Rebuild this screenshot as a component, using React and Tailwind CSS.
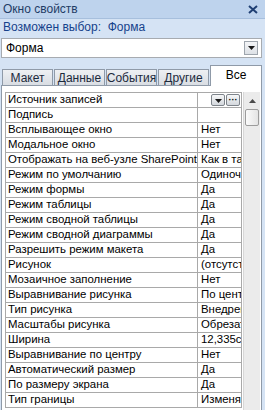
import React from 'react';

const rows = [
  ["Источник записей", ""],
  ["Подпись", ""],
  ["Всплывающее окно", "Нет"],
  ["Модальное окно", "Нет"],
  ["Отображать на веб-узле SharePoint", "Как в таблице"],
  ["Режим по умолчанию", "Одиночная форма"],
  ["Режим формы", "Да"],
  ["Режим таблицы", "Да"],
  ["Режим сводной таблицы", "Да"],
  ["Режим сводной диаграммы", "Да"],
  ["Разрешить режим макета", "Да"],
  ["Рисунок", "(отсутствует)"],
  ["Мозаичное заполнение", "Нет"],
  ["Выравнивание рисунка", "По центру"],
  ["Тип рисунка", "Внедренный"],
  ["Масштабы рисунка", "Обрезать"],
  ["Ширина", "12,335см"],
  ["Выравнивание по центру", "Нет"],
  ["Автоматический размер", "Да"],
  ["По размеру экрана", "Да"],
  ["Тип границы", "Изменяемая"],
];

const tabs = ["Макет", "Данные", "События", "Другие"];

function DownArrow() {
  return (
    <svg width="7" height="4" viewBox="0 0 7 4">
      <path d="M0 0h7L3.5 4z" fill="#1a1a1a" />
    </svg>
  );
}

export default function App() {
  return (
    <div className="w-[265px] h-[410px] overflow-hidden bg-[#d5e3f4] flex flex-col text-[11.4px] leading-none" style={{ fontFamily: '"Liberation Sans", Arial, sans-serif' }}>
      {/* title bar */}
      <div className="h-[19px] shrink-0 bg-[#bed3ed] border-b border-[#a7bfdd] flex items-center justify-between pl-[3px] pr-[7px] text-[12px]">
        <span className="text-[#1e3c66]">Окно свойств</span>
        <svg width="10" height="9" viewBox="0 0 10 9">
          <path d="M1 1l8 7M9 1L1 8" stroke="#1f3f73" strokeWidth="2" />
        </svg>
      </div>

      <div className="h-[15px] shrink-0 flex items-center pl-[3px] text-[#15428b] text-[12px]">
        Возможен выбор:&nbsp;&nbsp;Форма
      </div>

      {/* combo */}
      <div className="mt-[4px] mx-[1px] mr-[3px] h-[20px] shrink-0 bg-white border border-[#a7abb0] flex items-center justify-between pl-[4px] pr-[3px] text-[12px]">
        <span className="text-black">Форма</span>
        <div className="w-[14px] h-[14px] border border-[#9ea5ad] bg-gradient-to-b from-[#f4f5f7] to-[#dde1e6] flex items-center justify-center">
          <DownArrow />
        </div>
      </div>

      {/* tabs */}
      <div className="mt-[6px] h-[21px] shrink-0 flex items-end pl-[2px] gap-[1px] text-[12px]">
        {tabs.map((t) => (
          <div key={t} className="w-[51px] h-[16px] border border-b-0 border-[#8f9aa8] bg-gradient-to-b from-[#eef0f3] to-[#d9dde3] flex items-center justify-center text-[#1c2a3c]">
            {t}
          </div>
        ))}
        <div className="w-[52px] h-[21px] border border-b-0 border-[#8f9aa8] bg-white flex items-start justify-center pt-[3px] text-black relative top-[1px]">
          Все
        </div>
      </div>

      {/* tab page */}
      <div className="flex-1 mx-[1px] mr-[3px] bg-white border border-[#8f9aa8] border-b-0 pt-[6px] pl-[3px] flex">
        <div className="w-[237px] shrink-0 border-l border-t border-[#a9a9a9] self-start">
          {rows.map(([k, v], i) => (
            <div key={k} className="h-[15px] flex border-b border-[#a9a9a9] text-black">
              <div className="w-[192px] shrink-0 border-r border-[#a9a9a9] pl-[2px] flex items-center whitespace-nowrap overflow-hidden">
                {k}
              </div>
              <div className="flex-1 border-r border-[#a9a9a9] pl-[3px] flex items-center whitespace-nowrap overflow-hidden">
                {i === 0 ? (
                  <div className="flex gap-[1px] ml-auto mr-[1px]">
                    <div className="w-[14px] h-[12px] border border-[#7e848b] rounded-[2px] bg-gradient-to-b from-[#f6f7f8] to-[#d4d8dd] flex items-end justify-center pb-[2px]">
                      <DownArrow />
                    </div>
                    <div className="w-[14px] h-[12px] border border-[#7e848b] rounded-[2px] bg-gradient-to-b from-[#f6f7f8] to-[#d4d8dd] flex items-center justify-center text-[9px] font-bold leading-none">
                      ···
                    </div>
                  </div>
                ) : (
                  v
                )}
              </div>
            </div>
          ))}
        </div>
        {/* scrollbar */}
        <div className="w-[17px] ml-[1px] bg-[#ebebeb] border-l border-[#d7d7d7] flex flex-col items-center">
          <div className="h-[17px] w-full flex items-center justify-center">
            <svg width="7" height="4" viewBox="0 0 7 4">
              <path d="M0 4h7L3.5 0z" fill="#4a4a4a" />
            </svg>
          </div>
          <div className="w-[14px] h-[17px] border border-[#9c9c9c] rounded-[2px] bg-gradient-to-r from-[#fbfbfb] to-[#e4e4e4]" />
        </div>
      </div>
    </div>
  );
}
